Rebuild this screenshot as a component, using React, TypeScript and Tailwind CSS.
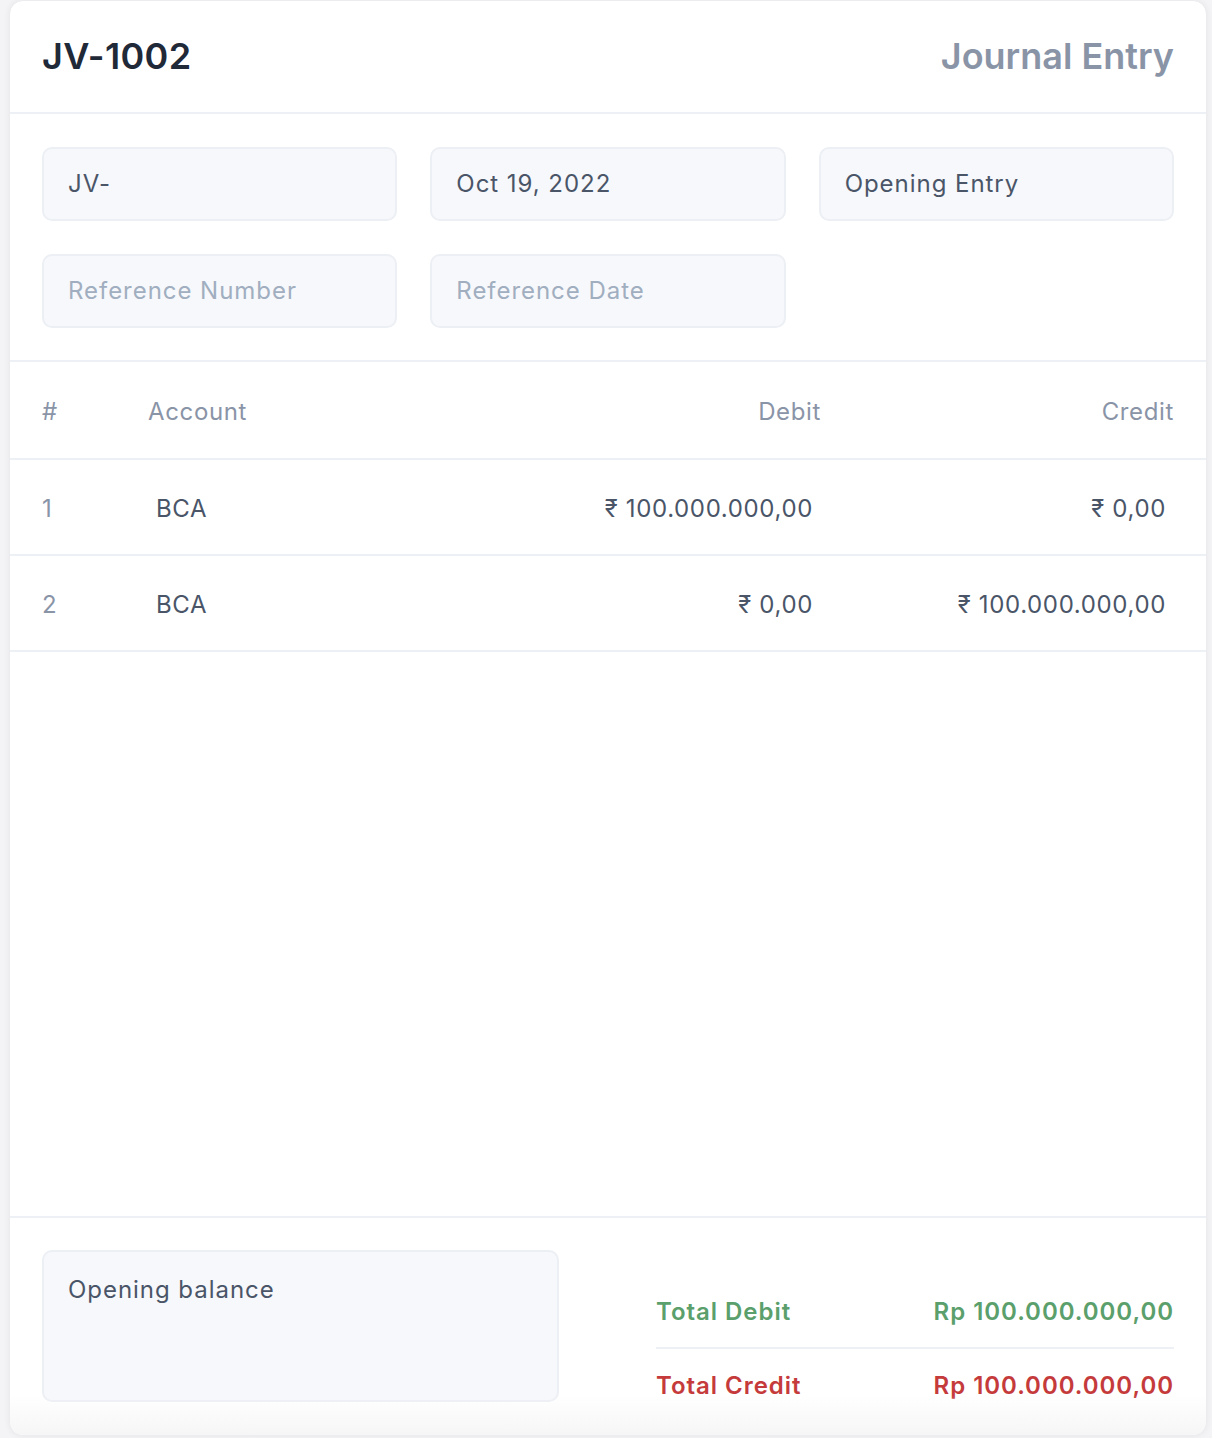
const inputBox =
    "h-[74px] rounded-[10px] border-2 border-[#eceff4] bg-[#f7f8fb] px-6 flex items-center text-[24px] tracking-[0.04em]";

const rows = [
    { no: 1, account: "BCA", debit: "₹ 100.000.000,00", credit: "₹ 0,00" },
    { no: 2, account: "BCA", debit: "₹ 0,00", credit: "₹ 100.000.000,00" },
];

const App = () => {
    return (
        <div
            className="min-h-[1438px] bg-[#f4f4f6] pl-[9px] pr-[5px] pb-[2px]"
            style={{ fontFamily: "Inter, 'Noto Sans', sans-serif" }}
        >
            <div className="relative flex h-[1436px] flex-col overflow-hidden rounded-[14px] border border-[#ececef] bg-white shadow-[0_0_6px_rgba(0,0,0,0.06)]">
                {/* header */}
                <div className="flex h-[113px] shrink-0 items-center justify-between border-b-2 border-[#edf0f4] px-8 pb-[2px]">
                    <h1 className="text-[36px] font-semibold text-[#1f2937] tracking-[0.01em]">JV-1002</h1>
                    <h2 className="text-[36px] font-semibold text-[#8a94a7]">Journal Entry</h2>
                </div>

                {/* form fields */}
                <div className="grid shrink-0 grid-cols-3 gap-x-[33px] gap-y-[33px] border-b-2 border-[#edf0f4] px-8 pt-[33px] pb-[32px]">
                    <div className={`${inputBox} text-[#4a5568]`}>JV-</div>
                    <div className={`${inputBox} text-[#4a5568]`}>Oct 19, 2022</div>
                    <div className={`${inputBox} text-[#4a5568]`}>Opening Entry</div>
                    <div className={`${inputBox} text-[#a0aec0]`}>Reference Number</div>
                    <div className={`${inputBox} text-[#a0aec0]`}>Reference Date</div>
                </div>

                {/* table */}
                <div className="flex-1 tracking-[0.04em]">
                    <div className="flex h-[98px] items-center border-b-2 border-[#edf0f4] px-8 pt-[3px] text-[24px] text-[#8a94a7]">
                        <div className="w-[106px]">#</div>
                        <div className="flex-1">Account</div>
                        <div className="w-[300px] text-right">Debit</div>
                        <div className="w-[353px] text-right">Credit</div>
                    </div>
                    {rows.map((row) => (
                        <div
                            key={row.no}
                            className="flex h-[96px] items-center border-b-2 border-[#edf0f4] px-8 pt-[3px] text-[24px] text-[#4a5568]"
                        >
                            <div className="w-[106px] text-[#8a94a7]">{row.no}</div>
                            <div className="flex-1 pl-2">{row.account}</div>
                            <div className="w-[300px] pr-2 text-right">{row.debit}</div>
                            <div className="w-[353px] pr-2 text-right">{row.credit}</div>
                        </div>
                    ))}
                </div>

                {/* footer */}
                <div className="flex h-[219px] shrink-0 gap-[97px] border-t-2 border-[#edf0f4] px-8 pt-[32px]">
                    <div className="h-[152px] w-[517px] rounded-[10px] border-2 border-[#eceff4] bg-[#f7f8fb] px-6 pt-[20px] text-[24px] tracking-[0.04em] text-[#4a5568]">
                        Opening balance
                    </div>
                    <div className="flex flex-1 flex-col pt-[44px] text-[24px] font-semibold tracking-[0.04em]">
                        <div className="flex h-[55px] items-start justify-between border-b-2 border-[#edf0f4] text-[#5b9f6c]">
                            <span>Total Debit</span>
                            <span>Rp 100.000.000,00</span>
                        </div>
                        <div className="flex justify-between pt-[19px] text-[#c53b3b]">
                            <span>Total Credit</span>
                            <span>Rp 100.000.000,00</span>
                        </div>
                    </div>
                </div>

                <div className="pointer-events-none absolute inset-x-0 bottom-0 h-[40px] bg-gradient-to-t from-[#f6f6f7] to-transparent" />
            </div>
        </div>
    );
};

export default App;
